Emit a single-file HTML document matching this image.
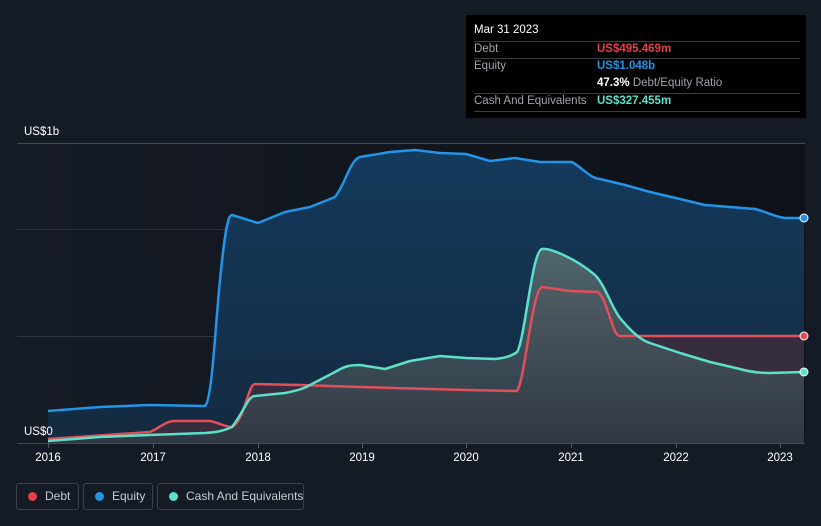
<!DOCTYPE html><html><head><style>
html,body{margin:0;width:821px;height:526px;overflow:hidden}
body{background:#151b25;font-family:"Liberation Sans",sans-serif;position:relative}
.tt{position:absolute;left:466px;top:15px;width:340px;height:103px;background:#000;color:#fff;font-size:11.5px;white-space:nowrap}
.tt .r{position:absolute;left:8px;width:326px;border-top:1px solid #3a3d42}
.lg{position:absolute;top:483px;height:27px;border:1px solid #3b414b;border-radius:3px;color:#c9ccd1;font-size:12px;line-height:25px;box-sizing:border-box;white-space:nowrap}
.lg i{position:absolute;left:11px;top:8px;width:9px;height:9px;border-radius:50%}
</style></head><body>
<svg width="821" height="526" style="position:absolute;left:0;top:0">
<defs>
<linearGradient id="bg" x1="0" x2="1" y1="0" y2="0"><stop offset="0" stop-color="#151b25"/><stop offset="1" stop-color="#0e1117"/></linearGradient>
<linearGradient id="eq" x1="0" x2="0" y1="0" y2="1"><stop offset="0" stop-color="#143a5c"/><stop offset="1" stop-color="#142a40"/></linearGradient>
<linearGradient id="ca" x1="0" x2="0" y1="0" y2="1"><stop offset="0" stop-color="#5a6e72"/><stop offset="1" stop-color="#2f3a45"/></linearGradient>
</defs>
<rect x="17" y="143" width="788" height="300" fill="url(#bg)"/>
<g stroke="#2e343d" stroke-width="1"><line x1="17" x2="805" y1="143.5" y2="143.5" stroke="#444a53"/><line x1="17" x2="805" y1="229.5" y2="229.5"/><line x1="17" x2="805" y1="336.5" y2="336.5"/><line x1="17" x2="805" y1="443.5" y2="443.5" stroke="#444a53"/></g>
<path d="M48,411 L100,407 150,405 205,406 C212,400 215,330 220,280 C225,230 228,215 232,215 L258,223 L285,212 310,207 335,197 C345,185 350,160 360,157 L390,152 415,150 440,153 466,154 490,161 515,158 540,162 572,162 C585,170 590,178 600,179 L625,185 650,192 680,199 705,205 730,207 755,209 C770,213 775,217 785,218 L804,218 L804,443 L48,443Z" fill="url(#eq)"/>
<path d="M48,439 L150,432 C160,428 165,421 175,421 L210,421 C220,423 225,427 232,427 C245,420 248,384 255,384 L300,385 360,387 466,390 517,391 C525,380 532,290 542,287 L570,291 598,292 C608,300 612,336 620,336 L804,336 L804,443 L48,443Z" fill="#3a2e3e" opacity="0.9"/>
<path d="M48,441 L100,437 150,435 205,433 C220,432 225,430 232,427 C245,410 248,396 255,396 L285,393 C300,390 305,388 310,385 L335,372 C345,366 350,365 360,365 L385,369 410,361 440,356 466,358 495,359 C505,358 512,356 517,352 C525,340 532,250 542,249 C550,248 575,258 595,275 C605,285 612,308 620,318 C630,330 640,340 650,343 L680,353 710,362 740,369 C750,372 760,373 770,373 L804,372 L804,443 L48,443Z" fill="url(#ca)" opacity="0.85"/>
<g fill="none" stroke-width="2.5" stroke-linejoin="round">
<path d="M48,411 L100,407 150,405 205,406 C212,400 215,330 220,280 C225,230 228,215 232,215 L258,223 L285,212 310,207 335,197 C345,185 350,160 360,157 L390,152 415,150 440,153 466,154 490,161 515,158 540,162 572,162 C585,170 590,178 600,179 L625,185 650,192 680,199 705,205 730,207 755,209 C770,213 775,217 785,218 L804,218" stroke="#2394e6"/>
<path d="M48,439 L150,432 C160,428 165,421 175,421 L210,421 C220,423 225,427 232,427 C245,420 248,384 255,384 L300,385 360,387 466,390 517,391 C525,380 532,290 542,287 L570,291 598,292 C608,300 612,336 620,336 L804,336" stroke="#e0505a"/>
<path d="M48,441 L100,437 150,435 205,433 C220,432 225,430 232,427 C245,410 248,396 255,396 L285,393 C300,390 305,388 310,385 L335,372 C345,366 350,365 360,365 L385,369 410,361 440,356 466,358 495,359 C505,358 512,356 517,352 C525,340 532,250 542,249 C550,248 575,258 595,275 C605,285 612,308 620,318 C630,330 640,340 650,343 L680,353 710,362 740,369 C750,372 760,373 770,373 L804,372" stroke="#5de0c9"/>
</g>
<g stroke="#fff" stroke-width="1"><circle cx="804" cy="218" r="4" fill="#2394e6"/><circle cx="804" cy="336" r="4" fill="#e0505a"/><circle cx="804" cy="372" r="4" fill="#5de0c9"/></g>
<g stroke="#555b63"><line x1="48.5" x2="48.5" y1="443" y2="448"/><line x1="153.5" x2="153.5" y1="443" y2="448"/><line x1="258.5" x2="258.5" y1="443" y2="448"/><line x1="362.5" x2="362.5" y1="443" y2="448"/><line x1="466.5" x2="466.5" y1="443" y2="448"/><line x1="571.5" x2="571.5" y1="443" y2="448"/><line x1="676.5" x2="676.5" y1="443" y2="448"/><line x1="780.5" x2="780.5" y1="443" y2="448"/></g>
<g fill="#fff" font-size="11.5" text-anchor="middle"><text x="48" y="461">2016</text><text x="153" y="461">2017</text><text x="258" y="461">2018</text><text x="362" y="461">2019</text><text x="466" y="461">2020</text><text x="571" y="461">2021</text><text x="676" y="461">2022</text><text x="780" y="461">2023</text></g>
<text x="24" y="135" fill="#fff" font-size="11.5">US$1b</text>
<text x="24" y="435" fill="#fff" font-size="11.5">US$0</text>
</svg>
<div class="tt">
<div style="position:absolute;left:8px;top:9px">Mar 31 2023</div>
<div class="r" style="top:26px"></div>
<div style="position:absolute;left:8px;top:28px;color:#a0a4a9">Debt</div><div style="position:absolute;left:131px;top:28px;color:#e5414a;font-weight:bold">US$495.469m</div>
<div class="r" style="top:43px"></div>
<div style="position:absolute;left:8px;top:45px;color:#a0a4a9">Equity</div><div style="position:absolute;left:131px;top:45px;color:#2394e6;font-weight:bold">US$1.048b</div>
<div style="position:absolute;left:131px;top:62px"><b>47.3%</b> <span style="color:#a0a4a9">Debt/Equity Ratio</span></div>
<div class="r" style="top:78px"></div>
<div style="position:absolute;left:8px;top:80px;color:#a0a4a9">Cash And Equivalents</div><div style="position:absolute;left:131px;top:80px;color:#5de0c9;font-weight:bold">US$327.455m</div>
<div class="r" style="top:96px"></div>
</div>
<div class="lg" style="left:16px;width:63px"><i style="background:#e5414a"></i><span style="position:absolute;left:28px">Debt</span></div>
<div class="lg" style="left:83px;width:70px"><i style="background:#2394e6"></i><span style="position:absolute;left:28px">Equity</span></div>
<div class="lg" style="left:157px;width:147px"><i style="background:#5de0c9"></i><span style="position:absolute;left:28px">Cash And Equivalents</span></div>
</body></html>
